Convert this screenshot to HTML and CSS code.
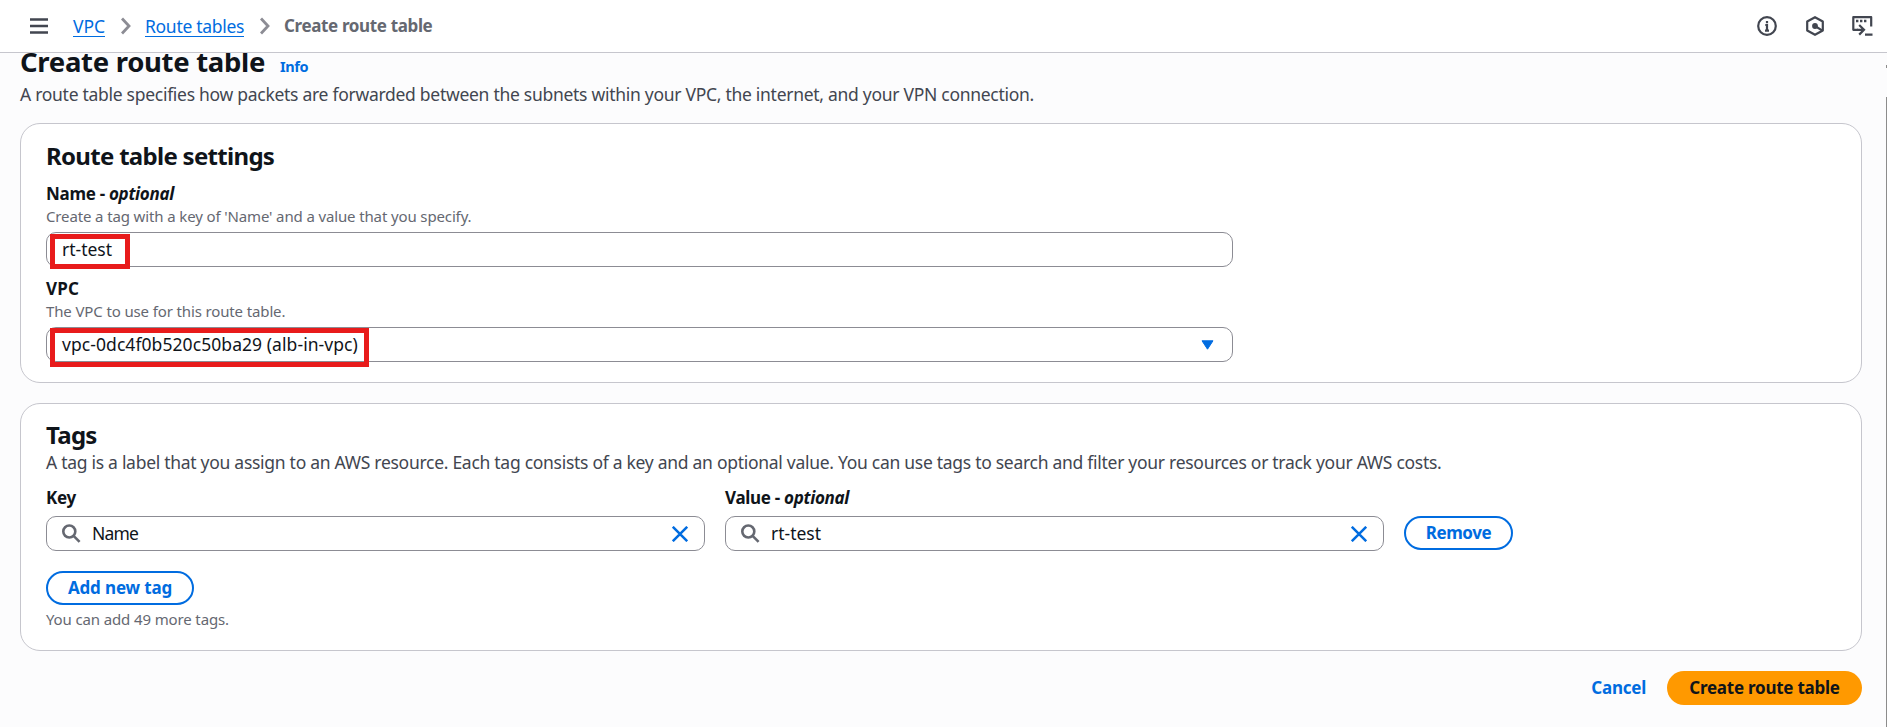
FILE: index.html
```
<!DOCTYPE html>
<html lang="en">
<head>
<meta charset="utf-8">
<title>Create route table | VPC</title>
<link rel="stylesheet" href="styles.css">
</head>
<body>
<header class="topbar">
  <button class="icon-btn menu" aria-label="Menu">
    <svg width="18" height="16" viewBox="0 0 18 16"><path d="M0 1.5h18M0 8h18M0 14.5h18" stroke="#424650" stroke-width="2.4"/></svg>
  </button>
  <nav class="crumbs">
    <a class="crumb-vpc" href="#">VPC</a>
    <svg class="chev" width="10" height="18" viewBox="0 0 10 18"><path d="M1 1.5l7 7.5-7 7.5" fill="none" stroke="#8c8c94" stroke-width="2.8"/></svg>
    <a class="crumb-tables" href="#">Route tables</a>
    <svg class="chev" width="10" height="18" viewBox="0 0 10 18"><path d="M1 1.5l7 7.5-7 7.5" fill="none" stroke="#8c8c94" stroke-width="2.8"/></svg>
    <span class="crumb-current">Create route table</span>
  </nav>
  <div class="tools">
    <svg width="20" height="20" viewBox="0 0 20 20" fill="none" stroke="#424650"><circle cx="10" cy="10" r="8.8" stroke-width="2.2"/><path d="M10 5v2.2M8.3 9H10v6M8 14.6h4" stroke-width="2.2"/></svg>
    <svg width="20" height="20" viewBox="0 0 20 20" fill="none" stroke="#424650" stroke-width="2.2"><path d="M10 1.2l7.8 4.3v9L10 18.8l-7.8-4.3v-9z" stroke-linejoin="round"/><circle cx="10" cy="10" r="2.9" fill="#424650" stroke="none"/><path d="M10 10l7 4.4"/></svg>
    <svg width="21" height="20" viewBox="0 0 21 20" fill="none" stroke="#424650" stroke-width="2.2"><path d="M6 13.8H1.3V1.2h17.9v9.3" stroke-linejoin="round"/><path d="M4 5h2.4M8 5h2.4M12 5h2.4" stroke-width="2.4"/><path d="M5 13.8h6M7.2 9l4.8 4.8-4.8 4.8M13 18.7h7.5"/></svg>
  </div>
</header>

<main class="page">
  <div class="title-row">
    <h1>Create route table</h1>
    <a class="info" href="#">Info</a>
  </div>
  <p class="desc">A route table specifies how packets are forwarded between the subnets within your VPC, the internet, and your VPN connection.</p>

  <section class="card settings">
    <h2>Route table settings</h2>
    <div class="field">
      <div class="label">Name - <em>optional</em></div>
      <div class="hint">Create a tag with a key of 'Name' and a value that you specify.</div>
      <div class="input"><span class="plain">rt-test</span><i class="mark mark-name"></i></div>
    </div>
    <div class="field">
      <div class="label vpc-label">VPC</div>
      <div class="hint">The VPC to use for this route table.</div>
      <div class="input select">
        <span class="plain vpc-id">vpc-0dc4f0b520c50ba29 (alb-in-vpc)</span>
        <svg width="13" height="10" viewBox="0 0 13 10"><path d="M1 .8h11L6.5 9.2z" fill="#006ce0" stroke="#006ce0" stroke-linejoin="round"/></svg>
        <i class="mark mark-vpc"></i>
      </div>
    </div>
  </section>

  <section class="card tags">
    <h2>Tags</h2>
    <p class="desc tags-desc">A tag is a label that you assign to an AWS resource. Each tag consists of a key and an optional value. You can use tags to search and filter your resources or track your AWS costs.</p>
    <div class="tag-row">
      <div class="tag-field">
        <div class="label">Key</div>
        <div class="input search">
          <svg width="19" height="19" viewBox="0 0 19 19" fill="none" stroke="#656871" stroke-width="2.6"><circle cx="7.3" cy="7.5" r="6"/><path d="M11.6 11.8l6 6"/></svg>
          <span class="value tight">Name</span>
          <svg width="16" height="16" viewBox="0 0 16 16"><path d="M.8.8l14.4 14.4M15.2.8L.8 15.2" stroke="#006ce0" stroke-width="2.5"/></svg>
        </div>
      </div>
      <div class="tag-field">
        <div class="label">Value - <em>optional</em></div>
        <div class="input search">
          <svg width="19" height="19" viewBox="0 0 19 19" fill="none" stroke="#656871" stroke-width="2.6"><circle cx="7.3" cy="7.5" r="6"/><path d="M11.6 11.8l6 6"/></svg>
          <span class="value">rt-test</span>
          <svg width="16" height="16" viewBox="0 0 16 16"><path d="M.8.8l14.4 14.4M15.2.8L.8 15.2" stroke="#006ce0" stroke-width="2.5"/></svg>
        </div>
      </div>
      <button class="btn remove">Remove</button>
    </div>
    <button class="btn add">Add new tag</button>
    <div class="hint tag-hint">You can add 49 more tags.</div>
  </section>

  <footer class="actions">
    <a class="cancel" href="#">Cancel</a>
    <button class="btn primary">Create route table</button>
  </footer>
  <div class="scroll"><span class="scroll-arrow"></span><span class="scroll-thumb"></span></div>
</main>
</body>
</html>
```
FILE: styles.css
```
* { box-sizing: border-box; }
html, body { height: 100%; }
body {
  margin: 0;
  background: #fcfcfd;
  color: #0f141a;
  font: 17.5px/22px "Noto Sans", sans-serif;
  display: flex;
  flex-direction: column;
  overflow: hidden;
}
svg { display: block; flex: none; }
a { color: #006ce0; text-decoration: none; }
h1, h2, p { margin: 0; }
button { font: inherit; border: 0; background: none; padding: 0; }

.topbar {
  flex: none;
  height: 53px;
  display: flex;
  align-items: center;
  padding: 0 14px 0 30px;
  background: #fff;
  border-bottom: 1px solid #c6c6cd;
}
.crumbs { display: flex; align-items: center; margin-left: 25px; white-space: nowrap; }
.crumbs a { border-bottom: 1px solid #006ce0; height: 22px; line-height: 22px; }
.crumb-vpc { width: 32px; }
.crumb-tables { width: 99px; letter-spacing: -.3px; }
.chev { margin: 0 14.5px 0 15.5px; }
.crumb-current { color: #656871; font-weight: 700; font-size: 17px; letter-spacing: -.36px; }
.tools { margin-left: auto; display: flex; gap: 27.5px; }

.page {
  position: relative;
  flex: 1;
  overflow: hidden;
  padding: 0 25px 0 20px;
}
.title-row { display: flex; align-items: baseline; margin-top: -10px; height: 36px; line-height: 36px; }
h1 { font-size: 27.5px; line-height: 37px; letter-spacing: -.3px; width: 260px; white-space: nowrap; }
.info { font-size: 14.5px; font-weight: 700; letter-spacing: -.4px; }
.desc { color: #424650; letter-spacing: -.283px; white-space: nowrap; }
.title-row + .desc { margin-top: 4px; }

.card {
  background: #fff;
  border: 1px solid #c6c6cd;
  border-radius: 20px;
  padding: 0 25px;
}
.settings { margin-top: 18px; height: 260px; padding-top: 17px; }
.tags { margin-top: 20px; height: 248px; padding-top: 16px; }
h2 { font-size: 24px; line-height: 30px; letter-spacing: -.7px; }
.label { font-weight: 700; font-size: 17px; letter-spacing: -.3px; }
.vpc-label { letter-spacing: .2px; }
.hint { color: #656871; font-size: 15px; line-height: 20px; letter-spacing: -.13px; }

.field { width: 1187px; margin-top: 12px; }
.field + .field { margin-top: 11px; }
.field .hint { margin-top: 1px; }
.field .input { margin-top: 6px; }
.input {
  position: relative;
  height: 35px;
  display: flex;
  align-items: center;
  border: 1px solid #8c8c94;
  border-radius: 10px;
  background: #fff;
  padding: 0 15px;
}
.plain { position: relative; z-index: 1; padding-bottom: 2px; }
.vpc-id { letter-spacing: .07px; }
.select { justify-content: space-between; padding-right: 18.5px; }
/* highlight rectangles laid over the field values */
.mark { position: absolute; border: 5px solid #e81b1b; }
.mark-name { left: 3px; top: 1px; width: 80px; height: 35px; }
.mark-vpc { left: 3px; top: 0; width: 319px; height: 39px; }

.tags-desc { margin-top: 1px; }
.tag-row { display: flex; align-items: flex-end; gap: 20px; margin-top: 14px; }
.tag-field { width: 659px; }
.tag-field .input { margin-top: 7px; }
.value { flex: 1; margin-left: 11px; padding-bottom: 1px; }
.tight { letter-spacing: -.8px; }
.search { padding-right: 16px; }

.btn {
  height: 34px;
  border-radius: 17px;
  font-weight: 700;
  font-size: 17px;
  line-height: 30px;
  color: #006ce0;
  text-align: center;
  white-space: nowrap;
}
.remove { width: 109px; border: 2px solid #006ce0; margin-bottom: 1px; letter-spacing: -.4px; }
.add { display: block; width: 148px; border: 2px solid #006ce0; margin-top: 20px; letter-spacing: -.15px; }
.tag-hint { margin-top: 4px; }

.actions { display: flex; justify-content: flex-end; align-items: center; gap: 21px; margin-top: 20px; }
.cancel { font-weight: 700; font-size: 17px; letter-spacing: -.25px; }
.primary { width: 195px; background: #ff9900; color: #0f141a; letter-spacing: -.24px; }

.scroll { position: absolute; right: 0; top: 0; bottom: 0; width: 1px; display: flex; flex-direction: column; }
.scroll-arrow { height: 3px; margin-top: 12px; background: #8c8c8c; }
.scroll-thumb { flex: 1; margin-top: 29px; background: #8c8c8c; }
```
